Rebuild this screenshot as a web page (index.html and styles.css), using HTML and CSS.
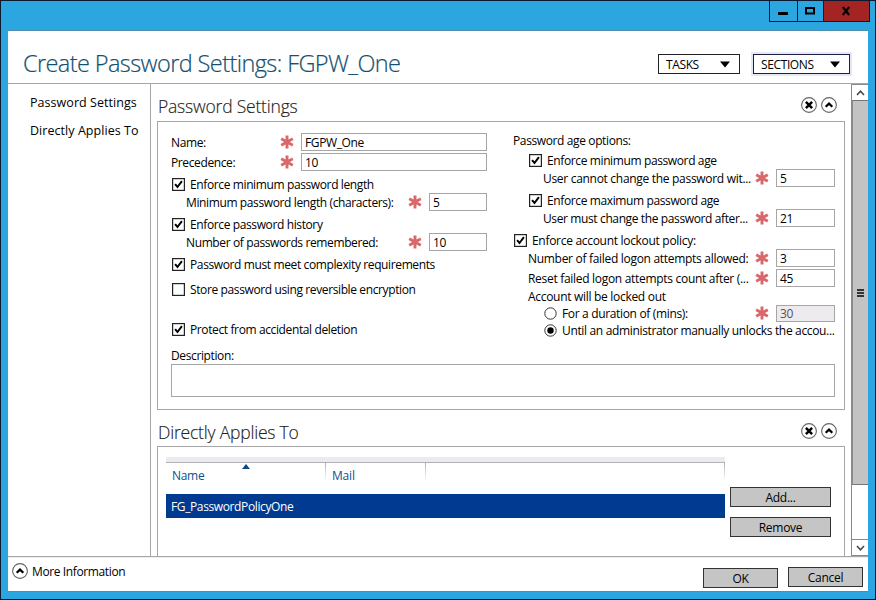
FILE: index.html
```
<!DOCTYPE html>
<html lang="en">
<head>
<meta charset="utf-8">
<title>Create Password Settings: FGPW_One</title>
<link rel="stylesheet" href="styles.css">
</head>
<body>
<svg class="defs" width="0" height="0" aria-hidden="true">
  <symbol id="star" viewBox="0 0 14 14"><path d="M7 .4V13.6M1.2 3.8 12.8 10.2M12.8 3.8 1.2 10.2" fill="none" stroke="#d9686a" stroke-width="2.9"/></symbol>
  <symbol id="tick" viewBox="0 0 13 13"><rect x=".6" y=".6" width="11.8" height="11.8" fill="#fff" stroke="#222" stroke-width="1.2"/><path d="M3.1 6.1 5.5 9 9.9 3.2" fill="none" stroke="#000" stroke-width="2"/></symbol>
  <symbol id="empty" viewBox="0 0 13 13"><rect x=".6" y=".6" width="11.8" height="11.8" fill="#fff" stroke="#222" stroke-width="1.2"/></symbol>
  <symbol id="radio" viewBox="0 0 13 13"><circle cx="6.5" cy="6.5" r="5.7" fill="#fff" stroke="#333"/></symbol>
  <symbol id="radio-on" viewBox="0 0 13 13"><circle cx="6.5" cy="6.5" r="5.7" fill="#fff" stroke="#333"/><circle cx="6.5" cy="6.5" r="3.2" fill="#000"/></symbol>
  <symbol id="close" viewBox="0 0 16 16"><circle cx="8" cy="8" r="7.4" fill="#fff" stroke="#666" stroke-width="1.1"/><path d="M4.9 4.9 11.1 11.1M11.1 4.9 4.9 11.1" stroke="#000" stroke-width="2.5"/></symbol>
  <symbol id="collapse" viewBox="0 0 16 16"><circle cx="8" cy="8" r="7.4" fill="#fff" stroke="#666" stroke-width="1.1"/><path d="M4.7 9.7 8 6.6 11.3 9.7" fill="none" stroke="#000" stroke-width="2.2"/></symbol>
</svg>
<div class="window">
  <div class="titlebar">
    <div class="controls">
      <span class="ctl min"><svg width="27" height="20"><path d="M8 12.5h10" stroke="#000" stroke-width="3"/></svg></span>
      <span class="ctl max"><svg width="25" height="20"><rect x="8" y="7" width="8" height="5.5" fill="none" stroke="#000" stroke-width="2"/></svg></span>
      <span class="ctl shut"><svg width="45" height="20"><path d="M18.8 6 25.2 14M25.2 6 18.8 14" stroke="#000" stroke-width="2.1"/></svg></span>
    </div>
  </div>
  <div class="client">
    <header class="head">
      <h1>Create Password Settings: FGPW_One</h1>
      <div class="menu tasks"><span>TASKS</span><svg width="10" height="7"><path d="M0 .5h10L5 6.5z"/></svg></div>
      <div class="menu sections"><span>SECTIONS</span><svg width="10" height="7"><path d="M0 .5h10L5 6.5z"/></svg></div>
    </header>
    <div class="middle">
      <nav class="side"><a>Password Settings</a><a>Directly Applies To</a></nav>
      <main class="content">
        <div class="sec-head"><h2>Password Settings</h2><svg class="round"><use href="#close"/></svg><svg class="round"><use href="#collapse"/></svg></div>
        <section class="panel settings">
          <div class="cols">
            <div class="left">
              <div class="row"><span class="label">Name:</span><svg class="star"><use href="#star"/></svg><span class="field wide">FGPW_One</span></div>
              <div class="row"><span class="label">Precedence:</span><svg class="star"><use href="#star"/></svg><span class="field wide">10</span></div>
              <div class="check"><svg class="box"><use href="#tick"/></svg><span>Enforce minimum password length</span></div>
              <div class="row sub"><span class="label">Minimum password length (characters):</span><svg class="star"><use href="#star"/></svg><span class="field small">5</span></div>
              <div class="check"><svg class="box"><use href="#tick"/></svg><span>Enforce password history</span></div>
              <div class="row sub"><span class="label">Number of passwords remembered:</span><svg class="star"><use href="#star"/></svg><span class="field small">10</span></div>
              <div class="check"><svg class="box"><use href="#tick"/></svg><span>Password must meet complexity requirements</span></div>
              <div class="check store"><svg class="box"><use href="#empty"/></svg><span>Store password using reversible encryption</span></div>
              <div class="check protect"><svg class="box"><use href="#tick"/></svg><span>Protect from accidental deletion</span></div>
            </div>
            <div class="right">
              <div class="line">Password age options:</div>
              <div class="check first in1"><svg class="box"><use href="#tick"/></svg><span>Enforce minimum password age</span></div>
              <div class="row in2"><span class="label fit">User cannot change the password wit...</span><svg class="star"><use href="#star"/></svg><span class="field small">5</span></div>
              <div class="check in1"><svg class="box"><use href="#tick"/></svg><span>Enforce maximum password age</span></div>
              <div class="row in2"><span class="label">User must change the password after...</span><svg class="star"><use href="#star"/></svg><span class="field small">21</span></div>
              <div class="check"><svg class="box"><use href="#tick"/></svg><span class="fit">Enforce account lockout policy:</span></div>
              <div class="row in0"><span class="label fit">Number of failed logon attempts allowed:</span><svg class="star"><use href="#star"/></svg><span class="field small">3</span></div>
              <div class="row in0"><span class="label fit">Reset failed logon attempts count after (...</span><svg class="star"><use href="#star"/></svg><span class="field small">45</span></div>
              <div class="line out fit">Account will be locked out</div>
              <div class="radio"><svg class="box"><use href="#radio"/></svg><span class="label">For a duration of (mins):</span><svg class="star"><use href="#star"/></svg><span class="field small off">30</span></div>
              <div class="radio"><svg class="box"><use href="#radio-on"/></svg><span class="label">Until an administrator manually unlocks the accou...</span></div>
            </div>
          </div>
          <div class="desc-label">Description:</div>
          <div class="desc"></div>
        </section>
        <div class="sec-head second"><h2>Directly Applies To</h2><svg class="round"><use href="#close"/></svg><svg class="round"><use href="#collapse"/></svg></div>
        <section class="panel applies">
          <div class="grid">
            <div class="grid-head">
              <span class="th name">Name<svg width="8" height="5"><path d="M0 5 4 0 8 5z" fill="#0c4a86"/></svg></span><span class="th mail">Mail</span><span class="th rest"></span>
            </div>
            <div class="tr">FG_PasswordPolicyOne</div>
          </div>
          <div class="actions"><button class="btn">Add...</button><button class="btn">Remove</button></div>
        </section>
      </main>
      <div class="scroll">
        <span class="arrow"><svg width="9" height="6"><path d="M1 5 4.5 1.2 8 5" fill="none" stroke="#444" stroke-width="1.5"/></svg></span>
        <span class="thumb"><i></i><i></i><i></i></span>
        <span class="track"></span>
        <span class="arrow down"><svg width="9" height="6"><path d="M1 1 4.5 4.8 8 1" fill="none" stroke="#444" stroke-width="1.5"/></svg></span>
      </div>
    </div>
    <footer class="foot">
      <svg class="round"><use href="#collapse"/></svg><span class="more">More Information</span>
      <button class="btn ok">OK</button><button class="btn">Cancel</button>
    </footer>
  </div>
</div>
</body>
</html>
```
FILE: styles.css
```
* { box-sizing: border-box; }
body {
  margin: 0;
  font: 12px/18px "Open Sans", "Noto Sans", sans-serif;
  letter-spacing: -0.38px;
  color: #000;
  white-space: nowrap;
}
svg { display: block; flex: none; }
.defs { position: absolute; }
.window {
  width: 876px;
  height: 600px;
  background: #2ba6e1;
  border: 1px solid #0b1a2e;
  padding: 0 7px 7px;
  overflow: hidden;
}
.titlebar { height: 29px; display: flex; justify-content: flex-end; }
.controls { display: flex; height: 21px; margin-right: -2px; border: 1px solid #0b1a2e; border-top: 0; }
.ctl + .ctl { border-left: 1px solid #0b1a2e; }
.shut { background: #a32422; }
.client {
  width: 860px;
  height: 562px;
  background: #fff;
  border-top: 1px solid #4c8db0;
  border-bottom: 1px solid #4c8db0;
  display: flex;
  flex-direction: column;
}
.head {
  height: 53px;
  flex: none;
  border-bottom: 1px solid #a6a6a6;
  display: flex;
  align-items: flex-start;
  padding: 0 18px 0 15px;
}
h1 {
  flex: 1;
  margin: 16px 0 0;
  font-size: 23.5px;
  line-height: 32px;
  font-weight: 300;
  letter-spacing: -0.59px;
  color: #14506f;
  -webkit-text-stroke: 0.2px #14506f;
}
.menu {
  height: 20px;
  margin-top: 23px;
  border: 1px solid #222;
  background: #fff;
  display: flex;
  align-items: center;
  justify-content: space-between;
  padding: 0 9px 0 7px;
}
.menu span { padding-top: 1px; }
.tasks { width: 82px; margin-right: 13px; }
.sections { width: 97px; border-color: #1d1d45; box-shadow: 0 0 0 2px #e4e7f6; }
.middle { height: 472px; flex: none; display: flex; }
.side {
  width: 143px;
  flex: none;
  border-right: 1px solid #a6a6a6;
  padding: 10px 0 0 22px;
  display: flex;
  flex-direction: column;
  gap: 10px;
  font-size: 12.5px;
  letter-spacing: 0.05px;
}
.content { width: 700px; flex: none; overflow: hidden; padding: 11px 0 0 6px; }
.sec-head { height: 26px; display: flex; width: 688px; padding: 0 8px 0 1px; gap: 4px; }
.second { margin-top: 11px; height: 25px; }
h2 {
  flex: 1;
  margin: -1px 0 0;
  font-size: 17.5px;
  line-height: 24px;
  font-weight: 300;
  letter-spacing: -0.2px;
  color: #222;
  -webkit-text-stroke: 0.15px #222;
}
.round { width: 16px; height: 16px; margin-top: 2px; }
.panel { width: 688px; border: 1px solid #a6a6a6; }
.settings { height: 289px; padding: 10px 0 0 13px; }
.cols { display: flex; height: 215px; }
.left { width: 342px; }
.right { width: 322px; }
.row { height: 20px; display: flex; align-items: center; }
.label { flex: 1; padding-top: 1px; }
.fit { letter-spacing: -0.3px; }
.left .row { width: 316px; }
.star { width: 14px; height: 14px; margin-top: -1px; }
.field {
  height: 18px;
  line-height: 17px;
  border: 1px solid #a6a6a6;
  padding-left: 3px;
  background: #fff;
}
.wide { width: 186px; margin-left: 7px; }
.small { width: 58px; margin-left: 7px; }
.right .small { width: 59px; }
.off { background: #eeebef; color: #555; height: 17px; line-height: 15px; }
.sub { padding-left: 15px; }
.check { height: 20px; padding: 5px 0 0 1px; display: flex; gap: 5px; line-height: 15px; }
.box { width: 13px; height: 13px; margin-top: 1px; }
.store { height: 25px; padding-top: 10px; }
.protect { height: 40px; padding-top: 25px; }
.line { height: 18px; }
.out { height: 17px; line-height: 17px; padding-left: 15px; }
.first { height: 18px; padding-top: 3px; }
.in1 { padding-left: 16px; }
.in0 { padding-left: 15px; }
.in2 { padding-left: 30px; }
.radio { height: 17px; display: flex; align-items: center; padding-left: 31px; }
.radio .box { margin: 0 5px 0 0; }
.radio .label { letter-spacing: -0.34px; }
.desc-label { height: 17px; line-height: 17px; }
.desc { width: 664px; height: 33px; border: 1px solid #a6a6a6; }
.applies { height: 140px; display: flex; padding: 10px 0 0 8px; }
.grid { width: 559px; }
.grid-head {
  height: 37px;
  border-top: 5px solid #eceaee;
  display: flex;
  color: #0f4f8f;
  line-height: 25px;
}
.th {
  height: 18px;
  padding-left: 6px;
  border-top: 1px solid #b8b5ba;
  border-right: 1px solid;
  border-image: linear-gradient(#b0adb2, #fff) 1;
}
.name { width: 160px; display: flex; letter-spacing: -0.3px; }
.name svg { margin: 1px 0 0 38px; }
.mail { width: 100px; letter-spacing: -0.2px; }
.rest { flex: 1; }
.tr { height: 24px; line-height: 25px; padding-left: 5px; background: #003a91; color: #fff; }
.actions { display: flex; flex-direction: column; gap: 10px; padding: 30px 0 0 5px; }
.btn {
  width: 101px;
  height: 20px;
  padding: 1px 0 0;
  border: 1px solid #333;
  background: #c4c5c4;
  color: #000;
  font: inherit;
  line-height: 18px;
  letter-spacing: -0.25px;
  flex: none;
}
.scroll { width: 17px; border: 1px solid #8a8a8a; border-right: 0; display: flex; flex-direction: column; flex: none; }
.arrow { height: 16px; display: flex; align-items: center; justify-content: center; border-bottom: 1px solid #777; }
.down { border-bottom: 0; border-top: 1px solid #8a8a8a; }
.thumb {
  height: 384px;
  background: #c3c3c3;
  border-left: 1px solid #8a8a8a;
  border-bottom: 1px solid #777;
  display: flex;
  flex-direction: column;
  align-items: center;
  justify-content: center;
  gap: 1px;
}
.thumb i { width: 7px; height: 2px; background: #333; }
.track { flex: 1; }
.foot { flex: 1; border-top: 1px solid #a6a6a6; display: flex; padding: 0 5px 0 4px; box-shadow: inset 0 1px #eee; }
.foot .round { margin-top: 6px; }
.more { flex: 1; margin: 6px 0 0 4px; }
.foot .btn { width: 75px; margin-top: 10px; }
.foot .ok { margin: 11px 10px 0 0; }
```
